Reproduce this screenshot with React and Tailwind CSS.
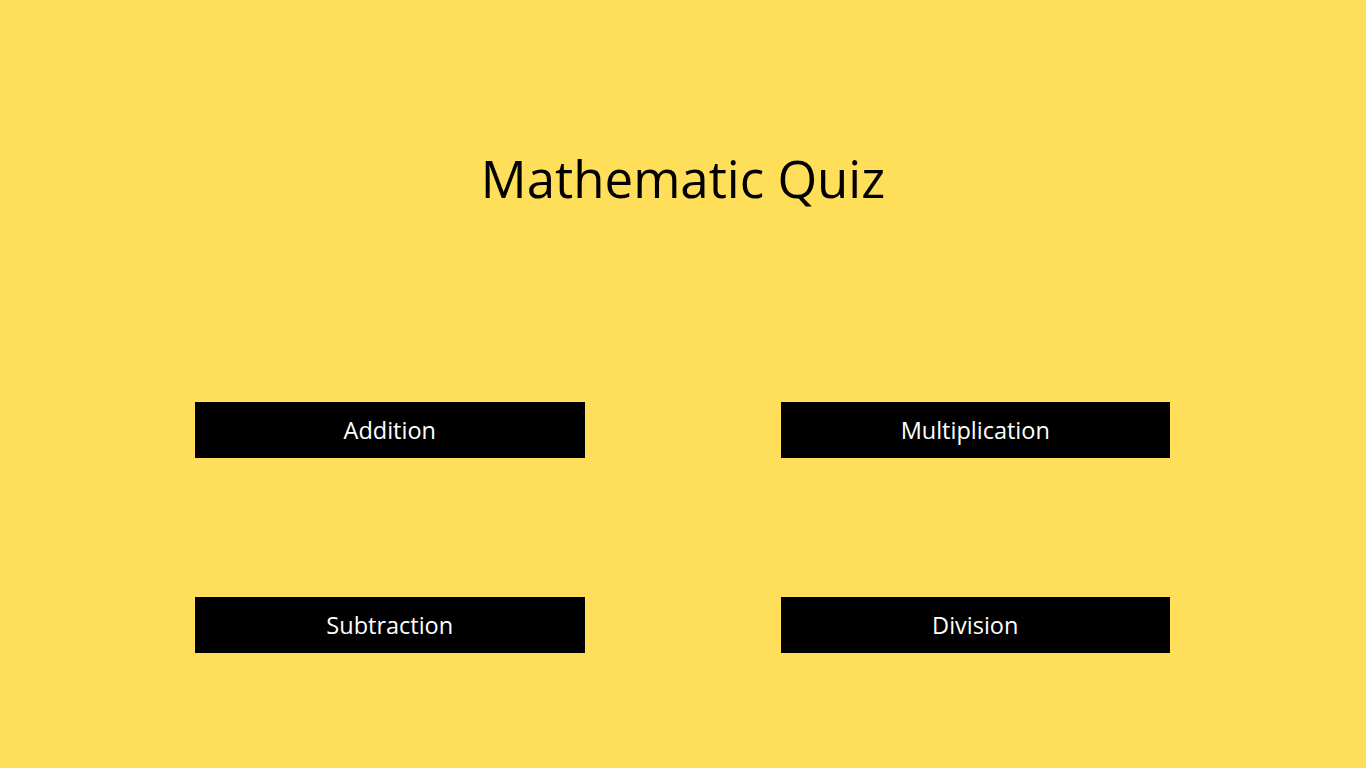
const topics = ['Addition', 'Multiplication', 'Subtraction', 'Division'];

export default function App() {
  return (
    <div
      className="min-h-screen w-full bg-[#ffde59] flex flex-col items-center"
      style={{ fontFamily: '"Open Sans", sans-serif' }}
    >
      <h1 className="mt-[143px] text-[51px] leading-[70px] text-black">Mathematic Quiz</h1>

      <div className="mt-[189px] w-full pl-[195px] pr-[196px] grid grid-cols-2 gap-x-[196px] gap-y-[139px]">
        {topics.map((t) => (
          <button
            key={t}
            className="h-[56px] pt-[2px] bg-black text-white text-[23.5px] flex items-center justify-center"
          >
            {t}
          </button>
        ))}
      </div>
    </div>
  );
}
